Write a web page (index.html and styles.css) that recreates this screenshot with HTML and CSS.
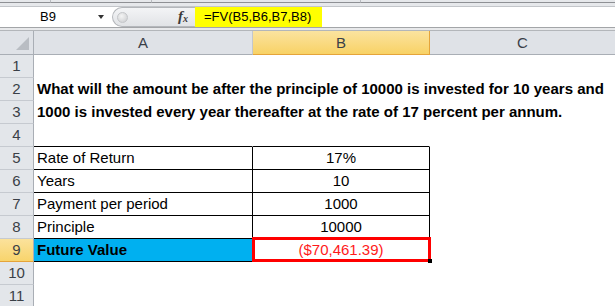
FILE: index.html
```html
<!DOCTYPE html>
<html>
<head>
<meta charset="utf-8">
<link rel="stylesheet" href="styles.css">
</head>
<body>
<div class="app">
  <div class="ribbon-edge">
    <div class="seg s1"></div>
    <div class="seg s2"></div>
    <div class="seg s3"></div>
    <div class="seg s4"></div>
  </div>
  <div class="formula-bar">
    <div class="namebox">
      <span class="name">B9</span>
      <span class="arrow"></span>
    </div>
    <div class="pill">
      <span class="knob"></span>
      <span class="fx"><i>f</i><sub>x</sub></span>
    </div>
    <div class="formula">=FV(B5,B6,B7,B8)</div>
    <div class="formula-rest"></div>
  </div>
  <div class="gap"></div>
  <div class="sheet">
    <div class="hdr corner"><span class="tri"></span></div>
    <div class="hdr col">A</div>
    <div class="hdr col sel">B</div>
    <div class="hdr col last">C</div>

    <div class="rh">1</div><div class="c"></div><div class="c"></div><div class="c"></div>
    <div class="rh">2</div><div class="c bold wide">What will the amount be after the principle of 10000 is invested for 10 years and</div>
    <div class="rh">3</div><div class="c bold wide">1000 is invested every year thereafter at the rate of 17 percent per annum.</div>
    <div class="rh">4</div><div class="c tb"></div><div class="c tb"></div><div class="c"></div>
    <div class="rh">5</div><div class="c t">Rate of Return</div><div class="c t ctr">17%</div><div class="c"></div>
    <div class="rh">6</div><div class="c t">Years</div><div class="c t ctr">10</div><div class="c"></div>
    <div class="rh">7</div><div class="c t">Payment per period</div><div class="c t ctr">1000</div><div class="c"></div>
    <div class="rh">8</div><div class="c t">Principle</div><div class="c t ctr">10000</div><div class="c"></div>
    <div class="rh hl">9</div><div class="c t bold blue">Future Value</div><div class="c t ctr red active">($70,461.39)<span class="selbox"></span><span class="handle"></span></div><div class="c"></div>
    <div class="rh">10</div><div class="c"></div><div class="c"></div><div class="c"></div>
    <div class="rh">11</div><div class="c"></div><div class="c"></div><div class="c"></div>
  </div>
</div>
</body>
</html>
```
FILE: styles.css
```css
html, body {
  margin: 0;
  padding: 0;
  background: #ffffff;
  overflow: hidden;
}
.app {
  width: 615px;
  height: 306px;
  overflow: hidden;
  font-family: "Liberation Sans", Arial, sans-serif;
}
.ribbon-edge {
  display: flex;
  height: 7px;
  box-sizing: border-box;
  background: #e6e8eb;
  border-bottom: 1px solid #c3c6ca;
}
.ribbon-edge .seg {
  height: 2px;
  border-right: 1px solid #b9bcc0;
  border-bottom: 1px solid #8e9094;
}
.ribbon-edge .s1 { width: 50px; }
.ribbon-edge .s2 { width: 100px; }
.ribbon-edge .s3 { width: 208px; }
.ribbon-edge .s4 { flex: 1; border-right: none; }

.formula-bar {
  display: flex;
  height: 20px;
  background: #ffffff;
}
.namebox {
  width: 112px;
  display: flex;
  align-items: center;
  box-sizing: border-box;
  padding-left: 40px;
}
.name {
  font-size: 13px;
  color: #000;
  line-height: 20px;
}
.arrow {
  margin-left: auto;
  margin-right: 8px;
  width: 0;
  height: 0;
  border-left: 3.5px solid transparent;
  border-right: 3.5px solid transparent;
  border-top: 4px solid #333;
}
.pill {
  width: 83px;
  display: flex;
  align-items: center;
  box-sizing: border-box;
  background: linear-gradient(#f3f4f6, #e1e3e6);
  border: 1px solid #b4b7bb;
  border-right: none;
  border-radius: 11px 0 0 11px;
  padding-left: 4px;
}
.knob {
  width: 9px;
  height: 9px;
  border-radius: 50%;
  background: radial-gradient(circle at 40% 35%, #f4f4f4, #c9cbce);
  border: 1px solid #c4c6c9;
}
.fx {
  margin-left: auto;
  margin-right: 7px;
  font-family: "Liberation Serif", serif;
  font-size: 15px;
  color: #3a3a3a;
  line-height: 16px;
  font-weight: bold;
}
.fx i { font-style: italic; }
.fx sub {
  font-size: 10px;
  font-style: italic;
  vertical-align: -1px;
}
.formula {
  width: 127px;
  background: #ffff00;
  font-size: 13px;
  line-height: 20px;
  box-sizing: border-box;
  padding-left: 9px;
  color: #000;
  white-space: nowrap;
}
.formula-rest { flex: 1; }
.gap {
  height: 4px;
  box-sizing: border-box;
  background: #e8e9eb;
  border-top: 1px solid #a3a5a8;
  border-bottom: 1px solid #b3b6ba;
}

.sheet {
  display: grid;
  grid-template-columns: 34px 219px 177px 185px;
  grid-template-rows: 24px;
  grid-auto-rows: 23px;
  font-size: 15px;
}
.hdr {
  box-sizing: border-box;
  background: #dfe2e7;
  border-right: 1px solid #c3c7cd;
  border-bottom: 1px solid #a9aeb5;
  text-align: center;
  line-height: 23px;
  color: #3a3f47;
}
.hdr.corner {
  position: relative;
  border-right-color: #a9aeb5;
}
.tri {
  position: absolute;
  right: 4px;
  bottom: 4px;
  width: 0;
  height: 0;
  border-left: 13px solid transparent;
  border-bottom: 13px solid #b9bdc3;
}
.hdr.sel {
  background: linear-gradient(#fbe39f, #f8d266);
  border-bottom-color: #e5a43a;
  border-right-color: #e5a43a;
}
.hdr.last { border-right: none; }
.rh {
  box-sizing: border-box;
  background: #e3e6ea;
  border-right: 1px solid #a9aeb5;
  border-bottom: 1px solid #c6cad0;
  text-align: center;
  line-height: 22px;
  color: #3a3f47;
}
.rh.hl {
  background: linear-gradient(#fbe29c, #f8d46c);
  border-bottom-color: #e5a43a;
}
.c {
  box-sizing: border-box;
  border-right: 1px solid transparent;
  border-bottom: 1px solid transparent;
  line-height: 22px;
  padding-left: 3px;
  white-space: nowrap;
  color: #000;
}
.c.wide { grid-column: span 3; }
.bold { font-weight: bold; }
.tb { border-bottom-color: #000; }
.t {
  border-right-color: #000;
  border-bottom-color: #000;
}
.ctr { text-align: center; padding-left: 0; }
.blue { background: #00b0f0; }
.red { color: #ff1a1a; }
.active { position: relative; }
.selbox {
  position: absolute;
  left: -1px;
  top: -2px;
  width: 179px;
  height: 25px;
  box-sizing: border-box;
  border: 3px solid #ff0000;
}
.handle {
  position: absolute;
  left: 175px;
  top: 20px;
  width: 4px;
  height: 4px;
  background: #000;
  border: 1px solid #fff;
  border-left: none;
  border-top: none;
}
```
